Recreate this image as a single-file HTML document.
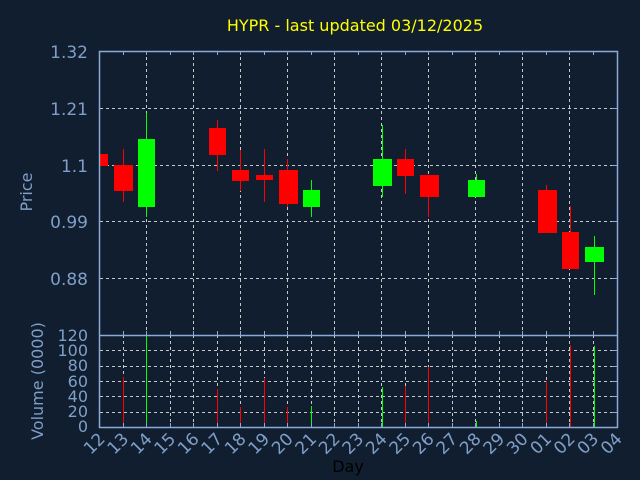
<!DOCTYPE html>
<html><head><meta charset="utf-8"><style>
html,body{margin:0;padding:0;background:#111e2f;width:640px;height:480px;overflow:hidden}
svg{display:block;font-family:"DejaVu Sans","Liberation Sans",sans-serif}
</style></head><body>
<svg width="640" height="480" viewBox="0 0 640 480" xmlns="http://www.w3.org/2000/svg">
<rect width="640" height="480" fill="#111e2f"/>
<text x="355" y="31" fill="#ffff00" font-size="16" text-anchor="middle">HYPR - last updated 03/12/2025</text>
<g fill="#7f9fc8" font-size="17" text-anchor="end">
<text x="88" y="58">1.32</text><text x="88" y="115">1.21</text><text x="88" y="172">1.1</text><text x="88" y="228">0.99</text><text x="88" y="285">0.88</text>
</g>
<g fill="#7f9fc8" font-size="16" text-anchor="end">
<text x="88" y="341">120</text><text x="88" y="356">100</text><text x="88" y="371">80</text><text x="88" y="387">60</text><text x="88" y="402">40</text><text x="88" y="417">20</text><text x="88" y="432">0</text>
</g>
<text transform="translate(32,192) rotate(-90)" fill="#7f9fc8" font-size="16" text-anchor="middle">Price</text>
<text transform="translate(43,381) rotate(-90)" fill="#7f9fc8" font-size="16" text-anchor="middle">Volume (0000)</text>
<text x="348" y="472" fill="#000" font-size="16" text-anchor="middle">Day</text>
<g stroke="#c8c8c8" stroke-width="1" stroke-dasharray="3,3" fill="none">
<path d="M100 108.5H617M100 165.5H617M100 221.5H617M100 278.5H617"/>
<path d="M146.5 51V335M193.5 51V335M240.5 51V335M287.5 51V335M334.5 51V335M381.5 51V335M428.5 51V335M475.5 51V335M522.5 51V335M569.5 51V335"/>
<path d="M100 350.5H617M100 366.5H617M100 381.5H617M100 396.5H617M100 412.5H617"/>
<path d="M123.5 335V427M146.5 335V427M170.5 335V427M193.5 335V427M217.5 335V427M240.5 335V427M264.5 335V427M287.5 335V427M311.5 335V427M334.5 335V427M358.5 335V427M381.5 335V427M405.5 335V427M428.5 335V427M452.5 335V427M475.5 335V427M499.5 335V427M522.5 335V427M546.5 335V427M569.5 335V427M593.5 335V427"/>
</g>
<g stroke="#ff0000" stroke-width="1">
<path d="M123.5 149V202M217.5 120V171M240.5 150V191M264.5 149V202M287.5 159V207M405.5 149V194M428.5 175V217M546.5 185V190M570.5 206V269"/>
<path d="M123.5 377V427M217.5 389V427M240.5 407V427M264.5 378V427M287.5 407V427M405.5 386V427M428.5 367V427M546.5 381V427M570.5 345V427"/>
</g>
<g stroke="#00ff00" stroke-width="1">
<path d="M146.5 113V217M311.5 180V217M382.5 125V197M476.5 174V180M594.5 236V295"/>
<path d="M146.5 335V427M311.5 406V427M382.5 387V427M476.5 421V427M594.5 346V427"/>
</g>
<g fill="#ff0000">
<rect x="100" y="154" width="8" height="12"/>
<rect x="114" y="165" width="19" height="26"/>
<rect x="209" y="128" width="17" height="27"/>
<rect x="232" y="170" width="17" height="11"/>
<rect x="256" y="175" width="17" height="5"/>
<rect x="279" y="170" width="19" height="34"/>
<rect x="397" y="159" width="17" height="17"/>
<rect x="420" y="175" width="19" height="22"/>
<rect x="538" y="190" width="19" height="43"/>
<rect x="562" y="232" width="17" height="37"/>
</g>
<g fill="#00ff00">
<rect x="138" y="139" width="17" height="68"/>
<rect x="303" y="190" width="17" height="17"/>
<rect x="373" y="159" width="19" height="27"/>
<rect x="468" y="180" width="17" height="17"/>
<rect x="585" y="247" width="19" height="15"/>
</g>
<g stroke="#8aaad8" stroke-width="1.5" fill="none">
<path d="M99.5 51.5H617.5V427.5H99.5Z"/>
<path d="M99.5 335.5H617.5"/>
</g>
<g stroke="#8aaad8" stroke-width="1" fill="none">
<path d="M123.5 51V55M146.5 51V55M170.5 51V55M193.5 51V55M217.5 51V55M240.5 51V55M264.5 51V55M287.5 51V55M311.5 51V55M334.5 51V55M358.5 51V55M381.5 51V55M405.5 51V55M428.5 51V55M452.5 51V55M475.5 51V55M499.5 51V55M522.5 51V55M546.5 51V55M569.5 51V55M593.5 51V55"/>
<path d="M123.5 331V335M146.5 331V335M170.5 331V335M193.5 331V335M217.5 331V335M240.5 331V335M264.5 331V335M287.5 331V335M311.5 331V335M334.5 331V335M358.5 331V335M381.5 331V335M405.5 331V335M428.5 331V335M452.5 331V335M475.5 331V335M499.5 331V335M522.5 331V335M546.5 331V335M569.5 331V335M593.5 331V335"/>
<path d="M123.5 423V427M146.5 423V427M170.5 423V427M193.5 423V427M217.5 423V427M240.5 423V427M264.5 423V427M287.5 423V427M311.5 423V427M334.5 423V427M358.5 423V427M381.5 423V427M405.5 423V427M428.5 423V427M452.5 423V427M475.5 423V427M499.5 423V427M522.5 423V427M546.5 423V427M569.5 423V427M593.5 423V427"/>
<path d="M612 108.5H617M612 165.5H617M612 221.5H617M612 278.5H617M612 350.5H617M612 366.5H617M612 381.5H617M612 396.5H617M612 412.5H617"/>
</g>
<g fill="#7f9fc8" font-size="17" text-anchor="end">
<text transform="translate(106,440) rotate(-45)">12</text>
<text transform="translate(129.5,440) rotate(-45)">13</text>
<text transform="translate(153,440) rotate(-45)">14</text>
<text transform="translate(176.5,440) rotate(-45)">15</text>
<text transform="translate(200,440) rotate(-45)">16</text>
<text transform="translate(223.5,440) rotate(-45)">17</text>
<text transform="translate(247,440) rotate(-45)">18</text>
<text transform="translate(270.5,440) rotate(-45)">19</text>
<text transform="translate(294,440) rotate(-45)">20</text>
<text transform="translate(317.5,440) rotate(-45)">21</text>
<text transform="translate(341,440) rotate(-45)">22</text>
<text transform="translate(364.5,440) rotate(-45)">23</text>
<text transform="translate(388,440) rotate(-45)">24</text>
<text transform="translate(411.5,440) rotate(-45)">25</text>
<text transform="translate(435,440) rotate(-45)">26</text>
<text transform="translate(458.5,440) rotate(-45)">27</text>
<text transform="translate(482,440) rotate(-45)">28</text>
<text transform="translate(505.5,440) rotate(-45)">29</text>
<text transform="translate(529,440) rotate(-45)">30</text>
<text transform="translate(552.5,440) rotate(-45)">01</text>
<text transform="translate(576,440) rotate(-45)">02</text>
<text transform="translate(599.5,440) rotate(-45)">03</text>
<text transform="translate(623,440) rotate(-45)">04</text>
</g>
</svg>
</body></html>
